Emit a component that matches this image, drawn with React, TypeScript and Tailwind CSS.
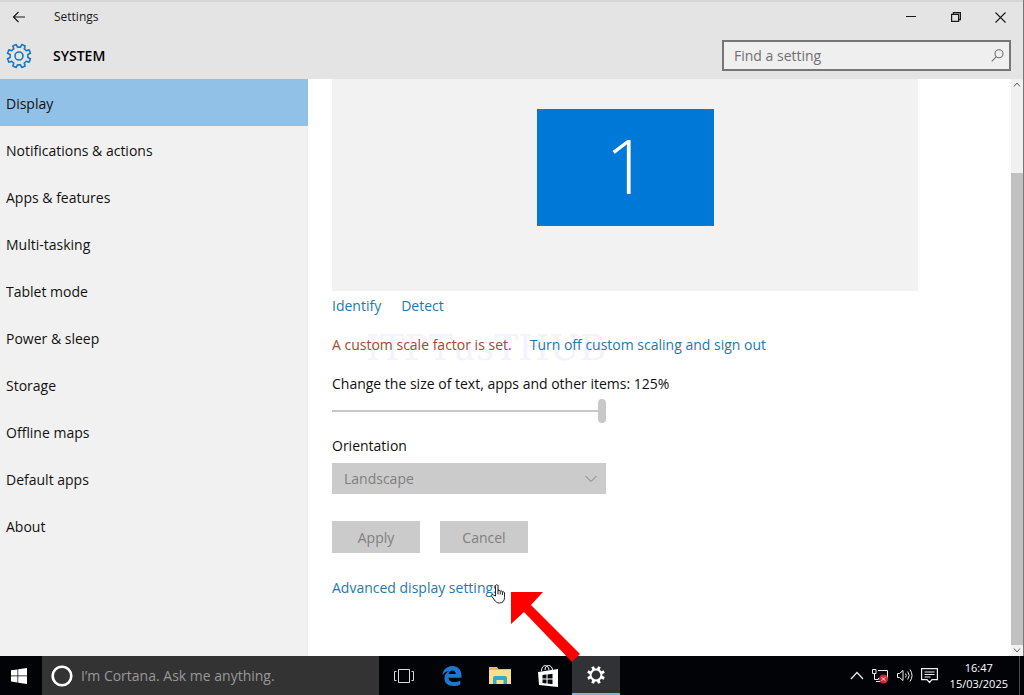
import type { ReactNode } from "react"

const navItems = [
  "Display",
  "Notifications & actions",
  "Apps & features",
  "Multi-tasking",
  "Tablet mode",
  "Power & sleep",
  "Storage",
  "Offline maps",
  "Default apps",
  "About",
]

// outline of a cog with square-ish teeth
function gearPath(cx: number, cy: number, outer: number, inner: number, teeth: number) {
  const step = (Math.PI * 2) / teeth
  const points: string[] = []
  for (let i = 0; i < teeth; i++) {
    const mid = i * step - Math.PI / 2 + step / 2
    const corners = [
      [mid - step * 0.29, inner],
      [mid - step * 0.2, outer],
      [mid + step * 0.2, outer],
      [mid + step * 0.29, inner],
    ]
    for (const [angle, radius] of corners) {
      points.push(`${(cx + Math.cos(angle) * radius).toFixed(2)} ${(cy + Math.sin(angle) * radius).toFixed(2)}`)
    }
  }
  return `M${points.join("L")}Z`
}

function TitleBar() {
  return (
    <div className="flex h-8 items-center border-t-2 border-[#d6d6d6] text-[#1a1a1a]">
      <button aria-label="Back" className="flex w-[38px] justify-center">
        <svg width="14" height="12" viewBox="0 0 14 12" fill="none" stroke="currentColor" strokeWidth="1.2">
          <path d="M13 6H1.5M6.5 1L1.5 6l5 5" />
        </svg>
      </button>
      <span className="ml-4 flex-1 text-[12px]">Settings</span>
      <div className="flex">
        <button aria-label="Minimise" className="flex w-[45px] items-center justify-center">
          <svg width="10" height="10" viewBox="0 0 10 10" fill="none" stroke="currentColor">
            <path d="M0 4.5h10" />
          </svg>
        </button>
        <button aria-label="Restore" className="flex w-[45px] items-center justify-center">
          <svg width="10" height="10" viewBox="0 0 10 10" fill="none" stroke="currentColor" strokeWidth="1.2">
            <path d="M.6 2.4h7v7h-7zM2.4 2.4V.6h7v7H7.6" />
          </svg>
        </button>
        <button aria-label="Close" className="flex w-[45px] items-center justify-center">
          <svg width="11" height="11" viewBox="0 0 11 11" fill="none" stroke="currentColor" strokeWidth="1.1">
            <path d="M.5.5l10 10M10.5.5l-10 10" />
          </svg>
        </button>
      </div>
    </div>
  )
}

function Header() {
  return (
    <header className="shrink-0 bg-[#e4e4e4]">
      <TitleBar />
      <div className="flex h-[47px] items-center pr-3">
        <svg className="ml-[6px]" width="26" height="26" viewBox="0 0 26 26" fill="none" stroke="#1b78c0" strokeWidth="1.6" strokeLinejoin="round">
          <path d={gearPath(13, 13, 11.8, 9, 8)} />
          <circle cx="13" cy="13" r="4" />
        </svg>
        <h1 className="ml-[21px] flex-1 text-[14px] font-semibold text-black">SYSTEM</h1>
        <label className="flex h-[31px] w-[289px] items-center border-2 border-[#767676] bg-[#efefef] pr-[5px] pl-[10px]">
          <input
            type="text"
            aria-label="Find a setting"
            placeholder="Find a setting"
            className="min-w-0 flex-1 bg-transparent text-[14px] outline-none placeholder:text-[#707070]"
          />
          <svg width="13" height="13" viewBox="0 0 13 13" fill="none" stroke="#707070" strokeWidth="1.1">
            <circle cx="8" cy="4.8" r="4" />
            <path d="M5.2 7.8L.7 12.3" />
          </svg>
        </label>
      </div>
    </header>
  )
}

function Sidebar() {
  return (
    <nav className="w-[308px] shrink-0 bg-[#f1f1f1]">
      {navItems.map((item, i) => (
        <a
          key={item}
          href="#"
          className={
            i === 0
              ? "flex h-[47px] items-center bg-[#91c1e7] px-[6px] pt-[2px] text-[#111]"
              : "flex h-[47px] items-center px-[6px] pt-[2px] text-[#111]"
          }
        >
          {item}
        </a>
      ))}
    </nav>
  )
}

function ScrollBar() {
  return (
    <div className="flex w-3 shrink-0 flex-col items-center bg-[#f1f1f1] text-[#606060]">
      <svg className="my-[3px] shrink-0" width="8" height="5" viewBox="0 0 8 5" fill="none" stroke="currentColor">
        <path d="M1 4.5l3-3.5 3 3.5" />
      </svg>
      <div className="mt-[83px] w-full flex-1 bg-[#c1c1c1]" />
      <svg className="my-[3px] shrink-0" width="8" height="5" viewBox="0 0 8 5" fill="none" stroke="currentColor">
        <path d="M1 .5L4 4 7 .5" />
      </svg>
    </div>
  )
}

function Pointer() {
  return (
    <svg className="absolute -right-[6px] -bottom-[6px]" width="15" height="20" viewBox="0 0 15 20" fill="#fff" stroke="#222" strokeLinejoin="round">
      <path d="M4.5 12V2.2c0-2 2.5-2 2.5 0V7c.3-1 2.1-.8 2.2.4.5-.9 2.1-.5 2.2.6.6-.7 2.1-.3 2.1 1v4.5c0 3.500-2 5.500-5 5.500-2.600 0-3.800-1.200-5-3L.8 12.300c-.9-1.500.7-2.300 1.800-1.200z" />
      <path d="M7 7v3.500M9.200 7.500V10.500M11.400 8v3" fill="none" />
    </svg>
  )
}

function DisplayPanel() {
  return (
    <main className="min-w-0 flex-1 pr-[93px] pl-6">
      <div className="flex h-[212px] justify-center bg-[#f2f2f2] pt-[30px]">
        <div className="flex h-[117px] w-[177px] items-center justify-center bg-[#0078d7] pb-[6px] pl-1 text-[76px] leading-none font-light text-white">
          1
        </div>
      </div>

      <div className="mt-[5px] flex gap-5 text-[#1f78ad]">
        <a href="#">Identify</a>
        <a href="#">Detect</a>
      </div>

      <div className="relative mt-[19px] flex gap-[18px]">
        <div aria-hidden="true" className="absolute -top-[1px] left-[34px] font-['DejaVu_Serif',serif] text-[36px] leading-7 text-[#f3f3fd]">
          ITPTusTHUB
        </div>
        <p className="relative text-[#a5482b]">A custom scale factor is set.</p>
        <a href="#" className="relative text-[#1f78ad]">Turn off custom scaling and sign out</a>
      </div>

      <label htmlFor="scale" className="mt-[19px] block text-[#111]">
        Change the size of text, apps and other items: 125%
      </label>
      <input
        id="scale"
        type="range"
        min="100"
        max="125"
        defaultValue="125"
        className="mt-[5px] block h-6 w-[274px] appearance-none bg-transparent [&::-webkit-slider-runnable-track]:h-[2px] [&::-webkit-slider-runnable-track]:bg-[#c8c8c8] [&::-webkit-slider-thumb]:-mt-[11px] [&::-webkit-slider-thumb]:h-6 [&::-webkit-slider-thumb]:w-2 [&::-webkit-slider-thumb]:appearance-none [&::-webkit-slider-thumb]:rounded-full [&::-webkit-slider-thumb]:bg-[#c8c8c8]"
      />

      <label htmlFor="orientation" className="mt-[13px] block text-[#111]">
        Orientation
      </label>
      <div className="relative mt-[7px] w-[274px] text-[#7f7f7f]">
        <select id="orientation" disabled className="h-[31px] w-full appearance-none bg-[#cbcbcb] px-3 opacity-100">
          <option>Landscape</option>
        </select>
        <svg className="absolute top-3 right-[9px]" width="12" height="8" viewBox="0 0 12 8" fill="none" stroke="currentColor">
          <path d="M.5 1L6 6.500 11.500 1" />
        </svg>
      </div>

      <div className="mt-[27px] flex gap-5 text-[#7f7f7f]">
        <button disabled className="h-8 w-[88px] bg-[#cbcbcb] pt-[2px]">Apply</button>
        <button disabled className="h-8 w-[88px] bg-[#cbcbcb] pt-[2px]">Cancel</button>
      </div>

      <div className="relative mt-[25px] w-fit text-[#1f78ad]">
        <a href="#">Advanced display settings</a>
        <Pointer />
      </div>
    </main>
  )
}

function TaskButton({ label, active, children }: { label: string; active?: boolean; children: ReactNode }) {
  return (
    <button
      aria-label={label}
      className={
        active
          ? "flex w-12 items-center justify-center border-b-2 border-[#7fb2e0] bg-[#303236]"
          : "flex w-12 items-center justify-center"
      }
    >
      {children}
    </button>
  )
}

function Taskbar() {
  return (
    <footer className="flex h-[39px] shrink-0 bg-[#020307] text-white">
      <button aria-label="Start" className="flex w-[42px] items-center pl-[11px]">
        <svg width="16" height="16" viewBox="0 0 16 16" fill="#fff">
          <path d="M0 2.300L6.500 1.400v6.200H0zM7.200 1.300L16 0v7.600H7.200zM0 8.300h6.500v6.200L0 13.600zM7.200 8.300H16V16l-8.800-1.300z" />
        </svg>
      </button>
      <label className="mr-px flex w-[337px] items-center gap-2 bg-[#333] pl-[9px]">
        <svg width="22" height="22" viewBox="0 0 22 22" fill="none" stroke="#fff" strokeWidth="2.600">
          <circle cx="11" cy="11" r="9.300" />
        </svg>
        <input
          type="text"
          aria-label="Ask Cortana"
          placeholder="I’m Cortana. Ask me anything."
          className="min-w-0 flex-1 bg-transparent text-[14px] outline-none placeholder:text-[#989898]"
        />
      </label>

      <TaskButton label="Task view">
        <svg width="20" height="16" viewBox="0 0 20 16" fill="none" stroke="#ddd">
          <path d="M4.500 1.500h11v13h-11zM2.500 3.500h-2v9h2M17.500 3.500h2v9h-2" />
        </svg>
      </TaskButton>
      <TaskButton label="Edge">
        <svg width="20" height="20" viewBox="0 0 20 20" fill="#1b78d2">
          <path d="M.3 9C1.200 3.500 5 0 10.300 0 16 0 19.500 4 19.500 9.500v2.200H6.500c.2 3 2.700 4.400 5.700 4.400 2.300 0 4.300-.6 6.100-1.700v4C16.500 19.400 14 20 11.300 20 5.800 20 2.400 16.900 2.400 12.300c0-3.300 1.900-6 4.800-7.400C4.200 5.300 1.900 6.500.3 9zm6.400-1.100h7.100c0-2.300-1.300-3.500-3.400-3.500-2 0-3.400 1.300-3.700 3.500z" />
        </svg>
      </TaskButton>
      <TaskButton label="File Explorer">
        <svg width="22" height="19" viewBox="0 0 22 19">
          <path d="M0 1h8l1.500 2H22v15H0z" fill="#e7bd55" />
          <path d="M0 4h22v14H0z" fill="#fbe08b" />
          <path d="M4 18v-6c0-1.200.8-2 2-2h10c1.200 0 2 .8 2 2v6h-3.500v-4h-7v4z" fill="#35a9c5" />
        </svg>
      </TaskButton>
      <TaskButton label="Store">
        <svg width="22" height="24" viewBox="0 0 22 24">
          <path d="M4.500 7c0-7 7-7 7.500-1M8 6c0-6 7-6 7.500 0" fill="none" stroke="#fff" />
          <path d="M1 8l20-3v18L2 21z" fill="#fff" />
          <path d="M5.500 11l4-.5v4h-4zM10.500 10.400l5-.6v4.700h-5zM5.500 15.500h4v4l-4-.5zM10.500 15.500h5v4.700l-5-.6z" fill="#090a0e" />
        </svg>
      </TaskButton>
      <TaskButton label="Settings" active>
        <svg width="20" height="20" viewBox="0 0 20 20" fill="#fff" fillRule="evenodd">
          <path d={`${gearPath(10, 10, 9, 6.5, 8)}M5.600 10a4.400 4.400 0 1 0 8.800 0a4.400 4.400 0 1 0-8.800 0z`} />
        </svg>
      </TaskButton>

      <div className="ml-auto flex items-center gap-2 pr-[11px]">
        <button aria-label="Show hidden icons">
          <svg width="14" height="9" viewBox="0 0 14 9" fill="none" stroke="#eee" strokeWidth="1.200">
            <path d="M1 8l6-6.500L13 8" />
          </svg>
        </button>
        <button aria-label="Network">
          <svg width="17" height="16" viewBox="0 0 17 16" fill="none" stroke="#eee">
            <path d="M6 2.500h9.500v8H6M.5 1.500h3.500v4H.5zM2.500 5.500v6h4M4 13.500h6" />
            <circle cx="11.500" cy="11" r="4.500" fill="#d3263a" stroke="none" />
            <path d="M9.800 9.300l3.400 3.400M13.200 9.300l-3.400 3.400" />
          </svg>
        </button>
        <button aria-label="Volume">
          <svg width="16" height="15" viewBox="0 0 16 15" fill="none" stroke="#eee">
            <path d="M.5 5.500h2l3.500-3v10l-3.500-3h-2zM8.500 5.500q1.500 2 0 4M10.700 3.500q3 4 0 8M13 1.500q4 6 0 12" />
          </svg>
        </button>
        <button aria-label="Notifications">
          <svg width="17" height="17" viewBox="0 0 17 17" fill="none" stroke="#eee" strokeWidth="1.200">
            <path d="M.6 1.600h15.800v11H11L8.500 15.500 6 12.600H.6zM3.500 5h10M3.500 7.500h10M3.500 10h6" />
          </svg>
        </button>
        <div className="ml-1 text-center text-[11px] leading-4">
          <div>16:47</div>
          <div>15/03/2025</div>
        </div>
      </div>
      <button aria-label="Show desktop" className="w-[5px] border-l border-[#4a4b4e]" />
    </footer>
  )
}

export default function App() {
  return (
    <div className="relative flex h-screen flex-col overflow-hidden bg-white font-['Open_Sans',sans-serif] text-[14px] leading-5">
      <div className="flex min-h-0 flex-1 flex-col border-r border-[#777]">
        <Header />
        <div className="flex min-h-0 flex-1">
          <Sidebar />
          <DisplayPanel />
          <ScrollBar />
        </div>
      </div>
      <Taskbar />
      {/* callout arrow, drawn over window and taskbar */}
      <svg className="pointer-events-none absolute bottom-[32px] left-[511px]" width="70" height="71" viewBox="0 0 70 71" fill="#f00">
        <path d="M0 0h32L20 13l49 49-8 8L13 20 0 32z" />
      </svg>
    </div>
  )
}
